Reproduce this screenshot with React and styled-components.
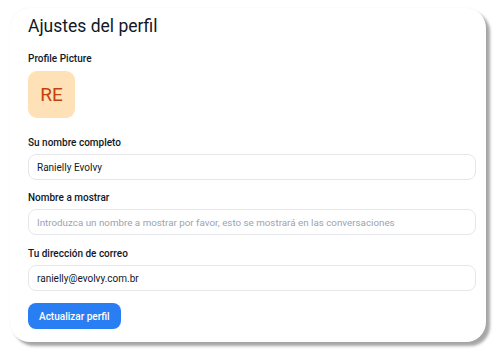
import React from "react";
import styled, { createGlobalStyle } from "styled-components";

const Global = createGlobalStyle`
  html, body { margin: 0; padding: 0; background: #ffffff; }
  body { font-family: Roboto, "Noto Sans", sans-serif; color: #111827; }
  * { box-sizing: border-box; }
`;

const Page = styled.div`
  width: 502px;
  height: 358px;
  padding: 8px 16px 0 10px;
`;

const Card = styled.div`
  width: 476px;
  height: 334px;
  background: #ffffff;
  border-radius: 20px;
  box-shadow: 4px 4px 3px rgba(0, 0, 0, 0.35), 0 0 2px rgba(0, 0, 0, 0.06);
  padding: 7px 11px 0 18px;
  display: flex;
  flex-direction: column;
`;

const Title = styled.h1`
  margin: 0;
  font-size: 17.5px;
  line-height: 22px;
  font-weight: 400;
  color: #111827;
`;

const Section = styled.div`
  display: flex;
  flex-direction: column;
  margin-top: ${(p) => p.$top || 0}px;
`;

const Label = styled.label`
  font-size: 10px;
  line-height: 14px;
  font-weight: 500;
  color: #111827;
  margin-bottom: ${(p) => p.$gap || 4}px;
`;

const Avatar = styled.div`
  width: 47px;
  height: 47px;
  border-radius: 9px;
  background: #fee1b7;
  color: #c2410c;
  font-size: 19px;
  display: flex;
  align-items: center;
  justify-content: center;
`;

const Input = styled.input`
  width: 448px;
  height: 26px;
  border: 1px solid #e5e7eb;
  border-radius: 8px;
  padding: 0 8px;
  font-family: inherit;
  font-size: 10px;
  font-weight: 400;
  color: #111827;
  background: #fff;
  outline: none;
  &::placeholder { color: #9ca3af; font-weight: 400; font-size: 9.8px; }
`;

const Button = styled.button`
  align-self: flex-start;
  margin-top: 12px;
  height: 26px;
  padding: 0 11px;
  white-space: nowrap;
  border: none;
  border-radius: 8px;
  background: #2a7ef4;
  color: #fff;
  font-family: inherit;
  font-size: 10px;
  font-weight: 500;
  cursor: pointer;
`;

export default function App() {
  return (
    <>
      <Global />
      <Page>
        <Card>
          <Title>Ajustes del perfil</Title>
          <Section $top={15}>
            <Label $gap={5}>Profile Picture</Label>
            <Avatar>RE</Avatar>
          </Section>
          <Section $top={18}>
            <Label>Su nombre completo</Label>
            <Input defaultValue="Ranielly Evolvy" />
          </Section>
          <Section $top={11}>
            <Label>Nombre a mostrar</Label>
            <Input placeholder="Introduzca un nombre a mostrar por favor, esto se mostrará en las conversaciones" />
          </Section>
          <Section $top={12}>
            <Label>Tu dirección de correo</Label>
            <Input defaultValue="ranielly@evolvy.com.br" />
          </Section>
          <Button>Actualizar perfil</Button>
        </Card>
      </Page>
    </>
  );
}
